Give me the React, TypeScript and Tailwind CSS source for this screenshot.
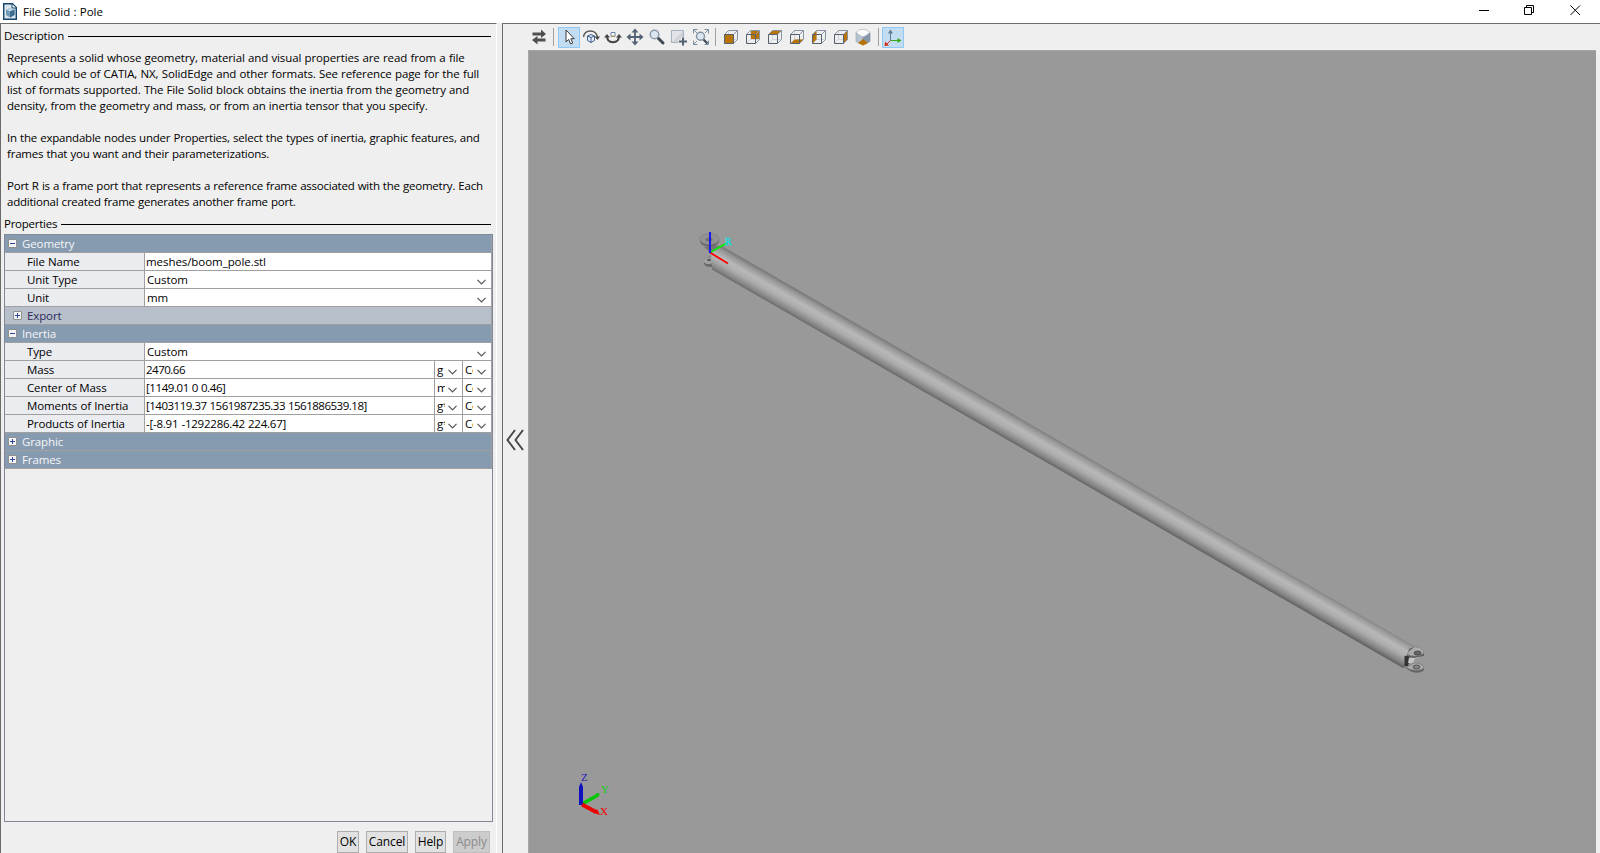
import type { ReactNode } from 'react'

const DESCRIPTION = [
  { text: 'Represents a solid whose geometry, material and visual properties are read from a file', tracking: 'tracking-[-0.11px]' },
  { text: 'which could be of CATIA, NX, SolidEdge and other formats. See reference page for the full', tracking: 'tracking-[-0.115px]' },
  { text: 'list of formats supported. The File Solid block obtains the inertia from the geometry and', tracking: 'tracking-[-0.14px]' },
  { text: 'density, from the geometry and mass, or from an inertia tensor that you specify.', tracking: 'tracking-[-0.17px]' },
  { text: '', tracking: '' },
  { text: 'In the expandable nodes under Properties, select the types of inertia, graphic features, and', tracking: 'tracking-[-0.21px]' },
  { text: 'frames that you want and their parameterizations.', tracking: 'tracking-[-0.21px]' },
  { text: '', tracking: '' },
  { text: 'Port R is a frame port that represents a reference frame associated with the geometry. Each', tracking: 'tracking-[-0.23px]' },
  { text: 'additional created frame generates another frame port.', tracking: 'tracking-[-0.22px]' },
]

function Chevron() {
  return (
    <svg width="9" height="6" viewBox="0 0 9 6" className="shrink-0" fill="none" stroke="#555" strokeWidth="1.2">
      <path d="M0.5 0.8 4.5 4.8 8.5 0.8" />
    </svg>
  )
}

function Expander({ open }: { open: boolean }) {
  return (
    <svg width="9" height="9" viewBox="0 0 9 9" className="shrink-0">
      <rect x="0.5" y="0.5" width="8" height="8" rx="0.5" fill="#f4f4f4" stroke="#8f8f8f" />
      <path d={open ? 'M2 4.5H7' : 'M2 4.5H7M4.5 2V7'} stroke="#2b4a9c" />
    </svg>
  )
}

function SectionTitle({ children }: { children: ReactNode }) {
  return (
    <div className="flex h-4 items-center gap-1 pl-1 pr-1">
      <span>{children}</span>
      <span className="h-px flex-1 bg-black" />
    </div>
  )
}

function Group({ title, open = false }: { title: string; open?: boolean }) {
  return (
    <div className="flex h-[18px] items-center gap-[5px] border-b border-[#a0a0a0] bg-[#879bb0] pl-[3px] text-[#f4f6f8]">
      <Expander open={open} />
      <span>{title}</span>
    </div>
  )
}

function MiniSelect({ value, width }: { value: string; width: string }) {
  return (
    <div className={`flex h-full items-center justify-between border-l border-[#a0a0a0] pl-[2px] ${width}`}>
      <span className="w-2 overflow-hidden">{value}</span>
      <div className="pt-1"><Chevron /></div>
    </div>
  )
}

type RowProps = { label: string; value: string; select?: boolean; unit?: string; tracking?: string }

function Row({ label, value, select, unit, tracking = '' }: RowProps) {
  return (
    <div className="flex h-[18px] border-b border-[#a0a0a0] bg-white">
      <div className="flex w-[140px] items-center border-r border-[#a0a0a0] bg-[#ebecf0] pl-[22px]">{label}</div>
      <div className={`flex flex-1 items-center justify-between pr-[5px] ${select ? 'pl-[2px]' : 'pl-px'}`}>
        <span className={tracking}>{value}</span>
        {select && <div className="pt-1"><Chevron /></div>}
      </div>
      {unit && <MiniSelect value={unit} width="w-7 pr-[5px]" />}
      {unit && <MiniSelect value="Co" width="w-[29px] pr-[5px]" />}
    </div>
  )
}

function DialogButton({ width, children, disabled }: { width: string; children: ReactNode; disabled?: boolean }) {
  return (
    <button
      disabled={disabled}
      className={`h-[22px] border text-[12px] ${width} ${disabled ? 'border-[#bfbfbf] bg-[#cccccc] text-[#8b8b8b]' : 'border-[#adadad] bg-[#e1e1e1]'}`}
    >
      {children}
    </button>
  )
}

function ToolButton({ active, children }: { active?: boolean; children: ReactNode }) {
  return (
    <div className={`flex h-[21px] w-[22px] items-center justify-center border ${active ? 'border-[#90c8f6] bg-[#c2dcf1]' : 'border-transparent'}`}>
      <svg width="18" height="18" viewBox="0 0 18 18" className="shrink-0" fill="none">{children}</svg>
    </div>
  )
}

function Separator({ className }: { className: string }) {
  return <div className={`h-[18px] w-px bg-[#a0a0a0] ${className}`} />
}

function Cube({ face }: { face: string }) {
  return (
    <>
      <path d="M6.5 2.5V11.5H15.5M6.5 11.5 2.5 15.5" stroke="#d0d4da" />
      <path d={face} fill="#b87309" />
      <path d="M2.5 6.5 6.5 2.5H15.5V11.5L11.5 15.5M11.5 6.5 15.5 2.5" stroke="#8794a3" />
      <path d="M2.5 6.5H11.5V15.5H2.5Z" stroke="#566170" />
    </>
  )
}

const FACES = [
  'M2.5 6.5H11.5V15.5H2.5Z',
  'M7 3H15V11H7Z',
  'M2.5 6.5 6.5 2.5H15.5L11.5 6.5Z',
  'M2.5 15.5 6.5 11.5H15.5L11.5 15.5Z',
  'M2.5 6.5 6.5 2.5V11.5L2.5 15.5Z',
  'M11.5 6.5 15.5 2.5V11.5L11.5 15.5Z',
]

function Toolbar() {
  return (
    <div className="flex h-[26px] items-center pl-[25px]">
      <ToolButton>
        <path d="M2.500 4.500H11V1.500L16 6 11 10V7.500H2.500ZM15.500 10.500H7.500V8L2 12 7.500 16.500V13.500H15.500Z" fill="#4f4f4f" />
      </ToolButton>
      <Separator className="ml-[3px] mr-1" />
      <ToolButton active>
        <path d="M6 2V14L8.7 11.4 10.6 16 12.7 15 10.8 10.7H14.3Z" fill="#fff" stroke="#3a3a3a" />
      </ToolButton>
      <ToolButton>
        <path d="M1.5 9C2 4.8 5 3 8.5 3S14.5 5 15.5 9" stroke="#555" strokeWidth="1.4" />
        <path d="M12.5 8.5H18L15.5 12Z" fill="#444" />
        <path d="M5.5 8 9 6.5 12.5 8V12.5L9 14.5 5.5 12.5ZM5.5 8 9 9.5 12.5 8M9 9.5V14.5" fill="#e6edf7" stroke="#3e5f91" />
      </ToolButton>
      <ToolButton>
        <path d="M3 8C3 12 5 14.2 9 14.2S15 12 15 8" stroke="#444" strokeWidth="2" />
        <path d="M0 9.5 3 6 6 9.5ZM12 9.5 15 6 18 9.5Z" fill="#444" />
        <path d="M7 4.5H11V8.5H7Z" fill="#fff" stroke="#6682ad" />
        <path d="M7 8H11" stroke="#c7a24c" />
      </ToolButton>
      <ToolButton>
        <path d="M9 2.5V15.5M2.5 9H15.5" stroke="#526173" strokeWidth="1.8" />
        <path d="M9 .5 12.500 4.500H5.500ZM9 17.5 5.500 13.500H12.500ZM.5 9 4.500 5.500V12.500ZM17.5 9 13.500 12.500V5.500Z" fill="#526173" />
      </ToolButton>
      <ToolButton>
        <path d="M10 10 15 15" stroke="#3f4956" strokeWidth="3" strokeLinecap="round" />
        <circle cx="6.5" cy="6.5" r="4.3" fill="#dce6f0" stroke="#8b98a8" strokeWidth="1.5" />
      </ToolButton>
      <ToolButton>
        <path d="M1.5 2.5H13.5V14.5H1.5Z" fill="#e1e4e8" stroke="#a5b2c1" />
        <path d="M2 14 13 3V14Z" fill="#d0d4d9" />
        <path d="M13 9V18M8.5 13.5H17.5" stroke="#efefef" strokeWidth="4" />
        <path d="M13 9.5V17.5M9 13.5H17" stroke="#536273" strokeWidth="2" />
      </ToolButton>
      <ToolButton>
        <path d="M1.5 5.5V1.5H5.5M1.5 1.5 5 5M12.5 1.5H16.5V5.5M16.5 1.5 13 5M1.5 12.5V16.5H5.5M1.5 16.5 5 13M16.5 12.5V16.5H12.5" stroke="#7d8fa3" />
        <path d="M11 11 15.5 15.5" stroke="#3f4956" strokeWidth="2.2" />
        <circle cx="8.5" cy="8.3" r="4" fill="#dce6f0" stroke="#8592a1" strokeWidth="1.4" />
      </ToolButton>
      <Separator className="ml-[3px] mr-1" />
      {FACES.map((face) => (
        <ToolButton key={face}><Cube face={face} /></ToolButton>
      ))}
      <ToolButton>
        <path d="M2 4.5 9 8V17L2 13.5Z" fill="#b6c2d0" stroke="#9ca9b8" strokeWidth=".7" />
        <path d="M16 4.5 9 8V17L16 13.5Z" fill="#8496aa" stroke="#8496aa" strokeWidth=".7" />
        <path d="M2 4.5 6 1.500H12L16 4.5 12 7.500 9 9 6 7.500Z" fill="#fbfbfb" stroke="#a8b2bd" strokeWidth=".7" />
        <path d="M9 11 14 15 9 17.5 4 15Z" fill="#b87309" />
      </ToolButton>
      <Separator className="mx-[3.5px]" />
      <ToolButton active>
        <path d="M6.5 3V12.5" stroke="#60788f" /><path d="M4 5.5 6.5 1.5 9 5.5Z" fill="#60788f" />
        <path d="M6.5 12.5H15" stroke="#39a818" /><path d="M13.5 10 17.5 12.5 13.5 15Z" fill="#39a818" />
        <path d="M6.5 12.5 3 16" stroke="#d42f18" /><path d="M.5 18 1 13.5 5 17.5Z" fill="#d42f18" />
      </ToolButton>
    </div>
  )
}

function Viewport() {
  return (
    <svg width="1068" height="803" viewBox="528 50 1068 803" className="block bg-[#999999]">
      <defs>
        <linearGradient id="pole" gradientUnits="userSpaceOnUse" x1="1070" y1="447" x2="1056.5" y2="470.5">
          <stop offset="0" stopColor="#7c7c7c" />
          <stop offset="0.12" stopColor="#989898" />
          <stop offset="0.35" stopColor="#b8b8b8" />
          <stop offset="0.55" stopColor="#adadad" />
          <stop offset="0.8" stopColor="#848484" />
          <stop offset="1" stopColor="#505050" />
        </linearGradient>
      </defs>
      <path d="M528 50.5H1596M528.5 50V853" stroke="#a6a6a6" />

      <path d="M704 259 713 254 716 268 705 265Z" fill="#8a8a8a" />
      <path d="M704 261V264C706 267 709 267 712 267V262Z" fill="#6a6a6a" />
      <ellipse cx="708.5" cy="261" rx="4.5" ry="3" fill="#a4a4a4" />
      <ellipse cx="709" cy="260" rx="2" ry="1.2" fill="#5d5d5d" />
      <path d="M704 247 712 254 722 247 715 245Z" fill="#767676" />
      <path d="M700 239V242C702 248 716 248 719 242V239Z" fill="#686868" />
      <ellipse cx="709.5" cy="239" rx="9.8" ry="5.5" fill="#929292" stroke="#7c7c7c" strokeWidth=".6" />
      <ellipse cx="709" cy="239.5" rx="3.5" ry="2" fill="#6f6f6f" />
      <path d="M711 253 722 246 1414 646 1418 651 1406 667 1403 668 712 269.500Z" fill="url(#pole)" />

      <path d="M1404 657 1409 655 1419 653 1423 656 1412 661 1407 666Z" fill="#aaa" />
      <path d="M1404.500 656 1412 655 1408 666H1404.500Z" fill="#333" />
      <path d="M1409 657.500H1415L1413 663H1408Z" fill="#c6c6c6" />
      <path d="M1409 649C1413 646 1423 649 1424 653V656L1413 658 1407 656Z" fill="#606060" />
      <path d="M1408 652 1414 647C1419 646 1424 650 1424 653 1420 656 1414 657 1408 655Z" fill="#acacac" stroke="#777" strokeWidth=".6" />
      <ellipse cx="1417.500" cy="653" rx="3.500" ry="1.900" fill="#666" stroke="#484848" />
      <path d="M1407 667 1413 663.500C1418 662 1424 665 1424 668V670C1420 674 1413 674 1406 668Z" fill="#656565" />
      <path d="M1407 667 1413 663.500C1418 662 1424 665 1424 668 1420 671 1413 671 1407 668Z" fill="#acacac" stroke="#777" strokeWidth=".6" />
      <ellipse cx="1416.500" cy="667" rx="3.500" ry="1.900" fill="#888" stroke="#505050" />

      <path d="M710 252.500 727 243" stroke="#00f000" strokeWidth="1.8" />
      <text x="725" y="245" fontSize="10" fontFamily="Liberation Serif, serif" fill="#10e0e0" stroke="#10e0e0" strokeWidth=".3">R</text>
      <path d="M710 252.500 728 263.500" stroke="#ff0000" strokeWidth="1.8" />
      <path d="M710 253V232" stroke="#1818f0" strokeWidth="2" />

      <path d="M582 804 598 795" stroke="#00c800" strokeWidth="3.500" />
      <path d="M596 793 600 793.500 598 796.500Z" fill="#00c800" />
      <path d="M581 805V787" stroke="#1010c0" strokeWidth="4" />
      <path d="M579 787 581 782 583 787Z" fill="#1010c0" />
      <path d="M582 804.500 596 812" stroke="#ee0000" strokeWidth="4" />
      <path d="M597 809 600 815 594 813Z" fill="#ee0000" />
      <g fontFamily="Liberation Serif, serif" fontSize="11">
        <text x="581" y="781" fill="#2020b8">Z</text>
        <text x="601" y="793" fill="#10d010">Y</text>
        <text x="600" y="815" fill="#f00000">X</text>
      </g>
    </svg>
  )
}

export default function App() {
  return (
    <div className="flex h-[853px] w-[1600px] flex-col overflow-hidden bg-[#efefef] font-['Open_Sans','Noto_Sans',sans-serif] text-[11.5px] leading-4 tracking-[-0.12px] [word-spacing:0.4px] text-black">
      <header className="flex h-[23px] shrink-0 items-center bg-white pl-[3px]">
        <svg width="14" height="17" viewBox="0 0 14 17">
          <path d="M.7.7H9.500L13.300 4.500V16.300H.7Z" fill="#d9e5ee" stroke="#174768" strokeWidth="1.400" />
          <path d="M9 1V5H13" fill="#fff" stroke="#174768" />
          <path d="M3 6.500 7.500 5 11.500 6.500V12L7 14.500 3 12Z" fill="#729bb8" />
          <path d="M3 6.500 7.500 5 11.500 6.500 7 8.500Z" fill="#bdd3e2" />
          <path d="M7 8.500 11.500 6.500V12L7 14.500Z" fill="#3c6d90" />
        </svg>
        <span className="ml-[6px] flex-1 tracking-[-0.05px]">File Solid : Pole</span>
        <svg width="102" height="12" viewBox="0 0 102 12" className="mr-[19px] mb-[3px]" fill="none" stroke="#000">
          <path d="M0 6.500H10M45.500 3.500H52.500V10.500H45.500ZM47.500 3.500V1.500H54.500V8.500H52.500M91.500 1.500 101 11M101 1.500 91.500 11" />
        </svg>
      </header>

      <div className="flex min-h-0 flex-1">
        <section className="flex w-[497px] shrink-0 flex-col border-l border-t border-r border-l-[#6b6b6b] border-t-[#6b6b6b] border-r-white pr-px">
          <div className="-ml-px pt-1"><SectionTitle>Description</SectionTitle></div>
          <div className="mt-[6px] h-[160px] whitespace-pre pl-[6px]">
            {DESCRIPTION.map(({ text, tracking }, i) => <div key={i} className={`h-4 ${tracking}`}>{text}</div>)}
          </div>
          <div className="-ml-px mt-[6px] tracking-[-0.25px]"><SectionTitle>Properties</SectionTitle></div>
          <div className="ml-[3px] mr-[2px] mt-[2px] h-[588px] shrink-0 border border-[#82879a]">
            <div className="border-r border-[#a0a0a0]">
              <Group title="Geometry" open />
              <Row label="File Name" value="meshes/boom_pole.stl" tracking="tracking-[-0.06px]" />
              <Row label="Unit Type" value="Custom" select />
              <Row label="Unit" value="mm" select />
              <div className="flex h-[18px] items-center gap-[5px] border-b border-[#a0a0a0] bg-[#b7bfca] pl-2 text-[#2c2a5c]">
                <Expander open={false} />
                <span>Export</span>
              </div>
              <Group title="Inertia" open />
              <Row label="Type" value="Custom" select />
              <Row label="Mass" value="2470.66" unit="g" tracking="tracking-[-0.5px]" />
              <Row label="Center of Mass" value="[1149.01 0 0.46]" unit="m" tracking="tracking-[-0.42px]" />
              <Row label="Moments of Inertia" value="[1403119.37 1561987235.33 1561886539.18]" unit="g*" tracking="tracking-[-0.49px]" />
              <Row label="Products of Inertia" value="-[-8.91 -1292286.42 224.67]" unit="g*" tracking="tracking-[-0.23px]" />
              <Group title="Graphic" />
              <Group title="Frames" />
            </div>
          </div>
          <div className="mt-[9px] flex justify-end gap-[7px] pr-[5px]">
            <DialogButton width="w-[22px]">OK</DialogButton>
            <DialogButton width="w-[42px]">Cancel</DialogButton>
            <DialogButton width="w-[31px]">Help</DialogButton>
            <DialogButton width="w-[37px]" disabled>Apply</DialogButton>
          </div>
        </section>

        <section className="ml-[5px] flex min-w-0 flex-1 border-l border-t border-[#6b6b6b]">
          <div className="flex w-[25px] shrink-0 items-center justify-center pr-[2px] pt-[2px]">
            <svg width="18" height="22" viewBox="0 0 18 22" className="shrink-0" fill="none" stroke="#484848" strokeWidth="2">
              <path d="M9 1 1.500 11 9 21M17 1 9.500 11 17 21" />
            </svg>
          </div>
          <div className="-ml-[25px] flex flex-1 flex-col">
            <Toolbar />
            <div className="pl-[25px]"><Viewport /></div>
          </div>
        </section>
      </div>
    </div>
  )
}
